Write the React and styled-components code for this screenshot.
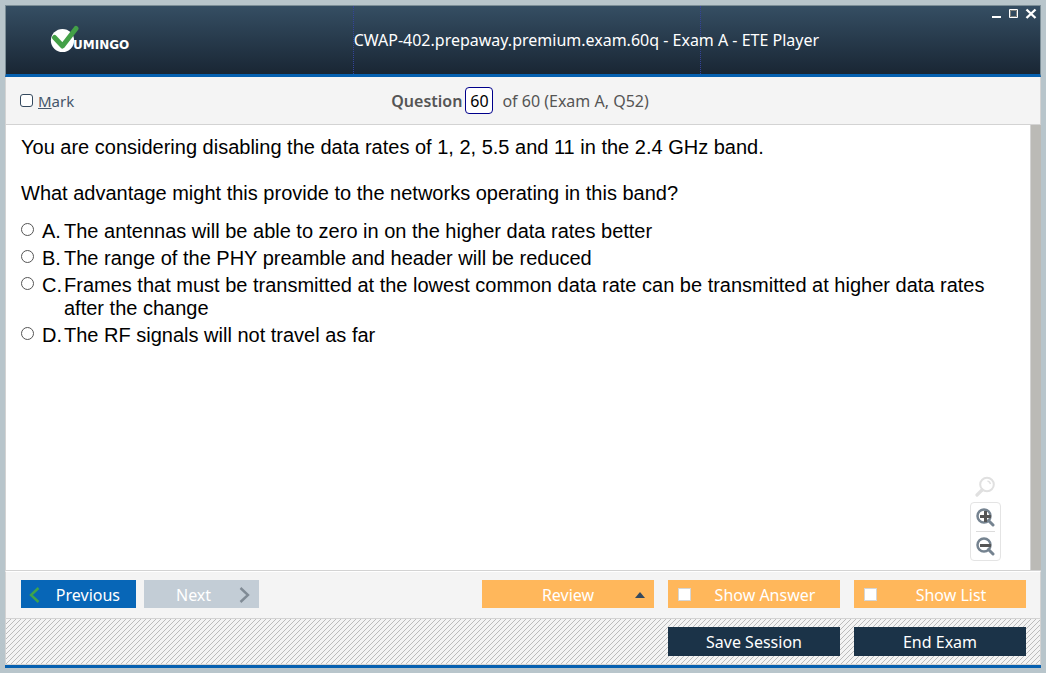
import React from 'react';
import styled, { createGlobalStyle } from 'styled-components';

const ui = '"Noto Sans", "Open Sans", sans-serif';
const body = '"Liberation Sans", Arial, sans-serif';

const GlobalStyle = createGlobalStyle`
  *, *::before, *::after { box-sizing: border-box; }
  body { margin: 0; background: #b8c5cb; font-family: ${ui}; }
  button, input { font-family: inherit; margin: 0; }
`;

const Page = styled.div`
  display: flex;
  flex-direction: column;
  min-height: 100vh;
  padding: 5px;
`;

const Window = styled.div`
  flex: 1;
  display: flex;
  flex-direction: column;
  border-bottom: 3px solid #0560b0;
`;

const Header = styled.header`
  display: grid;
  grid-template-columns: minmax(0, 347fr) minmax(0, 349fr) minmax(0, 339fr);
  height: 72px;
  border: 1px solid #7c8e97;
  border-bottom: 3px solid #0560b0;
  background: linear-gradient(#354e63, #192634);
`;

const LogoCell = styled.div`
  display: flex;
  align-items: center;
  padding-left: 44px;
`;

const TitleCell = styled.div`
  display: flex;
  align-items: center;
  border-left: 1px dotted #34439a;
  border-right: 1px dotted #34439a;
`;

const Title = styled.h1`
  margin: 0;
  font-size: 16px;
  line-height: 24px;
  font-weight: 400;
  white-space: nowrap;
  color: #fff;
`;

const Controls = styled.div`
  display: flex;
  justify-content: flex-end;
  align-items: flex-start;
  gap: 6px;
  padding: 2px 3px 0 0;
`;

const Control = styled.button`
  display: flex;
  padding: 0;
  border: 0;
  background: none;
  color: #fff;
`;

const Toolbar = styled.div`
  display: grid;
  grid-template-columns: 1fr auto 1fr;
  align-items: center;
  height: 48px;
  padding: 0 20px 0 14px;
  border: 1px solid #d3d3d3;
  border-top: 0;
  background: #f4f4f4;
`;

const MarkLabel = styled.label`
  display: flex;
  align-items: center;
  gap: 5px;
  font-size: 15px;
  color: #44566a;
`;

const MarkBox = styled.input`
  appearance: none;
  width: 13px;
  height: 13px;
  border: 1px solid #34495e;
  border-radius: 3px;
  background: #fff;
`;

const Counter = styled.div`
  display: flex;
  align-items: center;
  font-size: 16px;
  color: #555;
`;

const CounterLabel = styled.label`
  font-weight: 600;
  margin-right: 3px;
`;

const CounterInput = styled.input`
  width: 28px;
  height: 27px;
  padding: 0;
  margin-right: 9px;
  border: 1px solid #00008b;
  border-radius: 4px;
  background: #fff;
  font-size: 16px;
  text-align: center;
  color: #000;
`;

const Content = styled.main`
  position: relative;
  flex: 1;
  display: flex;
  border-left: 1px solid #d3d3d3;
  border-bottom: 1px solid #d3d3d3;
  background: #fff;
`;

const Question = styled.section`
  flex: 1;
  padding: 11px 40px 20px 15px;
  font-family: ${body};
  font-size: 20px;
  line-height: 23px;
  color: #000;
`;

const Paragraph = styled.p`
  margin: 0 0 23px;
  &:last-of-type { margin-bottom: 15px; }
`;

const Options = styled.div`
  display: flex;
  flex-direction: column;
  gap: 4px;
`;

const Option = styled.label`
  display: grid;
  grid-template-columns: 21px 22px 1fr;
`;

const Radio = styled.input`
  appearance: none;
  width: 13px;
  height: 13px;
  margin-top: 3px;
  border: 1px solid #555;
  border-radius: 50%;
  background: #fff;
`;

const ScrollTrack = styled.div`
  width: 11px;
  border-left: 1px solid #d3d3d3;
  background: #bbbab6;
`;

const ZoomTools = styled.div`
  position: absolute;
  right: 40px;
  bottom: 9px;
  display: flex;
  flex-direction: column;
  align-items: center;
  gap: 5px;
`;

const ZoomPanel = styled.div`
  display: flex;
  flex-direction: column;
  align-items: center;
  width: 31px;
  padding: 4px;
  border: 1px solid #e4e4e4;
  border-radius: 4px;
  background: #fff;
`;

const ZoomButton = styled.button`
  display: flex;
  padding: 0;
  border: 0;
  background: none;
`;

const Divider = styled.span`
  width: 19px;
  height: 1px;
  margin: 4px 0;
  background: #dcdcdc;
`;

const Bar = styled.div`
  display: flex;
  align-items: flex-start;
  gap: 14px;
  padding: 8px 14px 0 15px;
  border: 1px solid #d3d3d3;
  border-top: 0;
`;

const NavBar = styled(Bar)`
  height: 48px;
  border-top: 1px solid #fff;
  background: #f4f4f4;
`;

const SessionBar = styled(Bar)`
  height: 46px;
  justify-content: flex-end;
  background: #f4f4f4 url("data:image/svg+xml,%3Csvg xmlns='http://www.w3.org/2000/svg' width='5' height='5' shape-rendering='crispEdges'%3E%3Cpath d='M4 0h1v1H4zM3 1h1v1H3zM2 2h1v1H2zM1 3h1v1H1zM0 4h1v1H0z' fill='%23bcbcbc'/%3E%3C/svg%3E");
`;

const Pager = styled.div`
  display: flex;
  gap: 8px;
  margin-right: auto;
`;

const PagerButton = styled.button`
  display: flex;
  align-items: center;
  justify-content: space-between;
  width: 115px;
  height: 28px;
  padding: 1px ${p => (p.$next ? 9 : 16)}px 0 ${p => (p.$next ? 32 : 8)}px;
  border: 0;
  background: ${p => (p.$next ? '#c3cdd6' : '#0766b7')};
  color: #fff;
  font-size: 16px;
`;

const Action = styled.button`
  display: grid;
  grid-template-columns: 1fr;
  align-items: center;
  width: 172px;
  height: ${p => (p.$dark ? 29 : 28)}px;
  padding: 0;
  border: 0;
  background: ${p => (p.$dark ? '#1b3348' : '#ffb75b')};
  color: #fff;
  font-size: 16px;
  text-align: center;
`;

const ReviewButton = styled(Action)`
  grid-template-columns: 1fr 10px;
  padding: 1px 9px 0 19px;
`;

const Toggle = styled.label`
  display: grid;
  grid-template-columns: 13px 1fr;
  align-items: center;
  width: 172px;
  height: 28px;
  padding: 1px 1px 0 10px;
  background: #ffb75b;
  color: #fff;
  font-size: 16px;
  text-align: center;
`;

const ToggleBox = styled.input`
  appearance: none;
  width: 13px;
  height: 13px;
  border: 1px solid #d5d5d5;
  background: #fff;
`;

const Logo = () => (
  <svg width="84" height="30" viewBox="0 0 84 30" role="img" aria-label="Vumingo">
    <circle cx="12.500" cy="15.500" r="11.600" fill="#fff" />
    <path d="M4.500 12.500L12.500 21L26 3.500" fill="none" stroke="#43a047" strokeWidth="5" strokeLinecap="round" strokeLinejoin="round" />
    <text x="23" y="24" fill="#fff" fontFamily="DejaVu Sans" fontWeight="700" fontSize="12">UMINGO</text>
  </svg>
);

const Chevron = ({ d, color }) => (
  <svg width="11" height="18" viewBox="0 0 11 18" fill="none" stroke={color} strokeWidth="2.400">
    <path d={d} />
  </svg>
);

const Magnifier = ({ sign }) => (
  <svg width="20" height="20" viewBox="0 0 20 20" fill="none">
    <circle cx="8" cy="9" r="6.500" stroke="#758390" strokeWidth="2.500" />
    <path d="M12.500 13.500L17 18" stroke="#758390" strokeWidth="3" strokeLinecap="round" />
    <path d={sign === 'plus' ? 'M4 9.500H15M9.500 4V15' : 'M4 9.500H15'} stroke="#555" strokeWidth="3" />
  </svg>
);

const options = [
  ['A.', 'The antennas will be able to zero in on the higher data rates better'],
  ['B.', 'The range of the PHY preamble and header will be reduced'],
  ['C.', 'Frames that must be transmitted at the lowest common data rate can be transmitted at higher data rates after the change'],
  ['D.', 'The RF signals will not travel as far'],
];

export default function App() {
  return (
    <Page>
      <GlobalStyle />
      <Window>
        <Header>
          <LogoCell><Logo /></LogoCell>
          <TitleCell><Title>CWAP-402.prepaway.premium.exam.60q - Exam A - ETE Player</Title></TitleCell>
          <Controls>
            <Control aria-label="Minimize">
              <svg width="12" height="11" viewBox="0 0 12 11"><path d="M2 8h9v2H2z" fill="#fff" /></svg>
            </Control>
            <Control aria-label="Maximize">
              <svg width="11" height="11" viewBox="0 0 11 11" fill="none"><path d="M1.500 1.500h8v8h-8z" stroke="#fff" /><path d="M2.500 2.500h6v6h-6z" stroke="#82827c" /></svg>
            </Control>
            <Control aria-label="Close">
              <svg width="12" height="11" viewBox="0 0 12 11"><path d="M1.500 1.500L10.500 10M10.500 1.500L1.500 10" stroke="#fff" strokeWidth="2.400" /></svg>
            </Control>
          </Controls>
        </Header>
        <Toolbar>
          <MarkLabel><MarkBox type="checkbox" /><span><u>M</u>ark</span></MarkLabel>
          <Counter>
            <CounterLabel htmlFor="question-number">Question</CounterLabel>
            <CounterInput id="question-number" defaultValue="60" />
            <span>of 60 (Exam A, Q52)</span>
          </Counter>
        </Toolbar>
        <Content>
          <Question>
            <Paragraph>You are considering disabling the data rates of 1, 2, 5.5 and 11 in the 2.4 GHz band.</Paragraph>
            <Paragraph>What advantage might this provide to the networks operating in this band?</Paragraph>
            <Options>
              {options.map(([letter, text]) => (
                <Option key={letter}>
                  <Radio type="radio" name="answer" />
                  <span>{letter}</span>
                  <span>{text}</span>
                </Option>
              ))}
            </Options>
          </Question>
          <ScrollTrack />
          <ZoomTools>
            <svg width="22" height="22" viewBox="0 0 22 22" fill="none" stroke="#e0e0e0">
              <circle cx="12" cy="9.500" r="6.800" strokeWidth="2" />
              <path d="M7 15L2 20" strokeWidth="3.200" strokeLinecap="round" />
              <path d="M12.500 6Q15 6.500 15.500 9" strokeWidth="1.500" />
            </svg>
            <ZoomPanel>
              <ZoomButton aria-label="Zoom in"><Magnifier sign="plus" /></ZoomButton>
              <Divider />
              <ZoomButton aria-label="Zoom out"><Magnifier sign="minus" /></ZoomButton>
            </ZoomPanel>
          </ZoomTools>
        </Content>
        <NavBar>
          <Pager>
            <PagerButton>
              <Chevron d="M9.500 2L2 9L9.500 16" color="#3fa34d" />Previous
            </PagerButton>
            <PagerButton $next>
              Next<Chevron d="M1.500 2L9 9L1.500 16" color="#808b95" />
            </PagerButton>
          </Pager>
          <ReviewButton>
            <span>Review</span>
            <svg width="10" height="6" viewBox="0 0 10 6"><path d="M0 6L5 0L10 6z" fill="#34495e" /></svg>
          </ReviewButton>
          <Toggle><ToggleBox type="checkbox" /><span>Show Answer</span></Toggle>
          <Toggle><ToggleBox type="checkbox" /><span>Show List</span></Toggle>
        </NavBar>
        <SessionBar>
          <Action $dark>Save Session</Action>
          <Action $dark>End Exam</Action>
        </SessionBar>
      </Window>
    </Page>
  );
}
